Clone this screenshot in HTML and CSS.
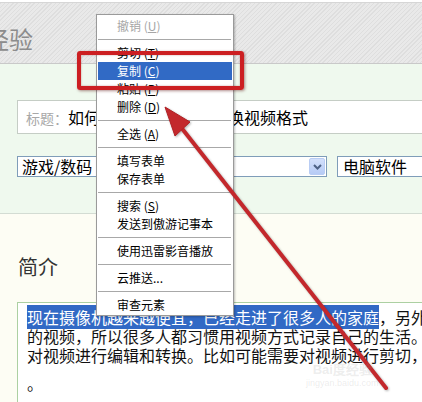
FILE: index.html
```html
<!DOCTYPE html>
<html lang="zh-CN">
<head>
    <meta charset="UTF-8">
    <meta name="viewport" content="width=device-width, initial-scale=1.0">
    <title>经验 - 编辑</title>
    <link rel="stylesheet" href="styles.css">
</head>
<body>
<div class="page">
    <div class="masthead">
        <span class="brand">经验</span>
    </div>

    <div class="editor">
        <div class="title-field">
            <span class="label">标题：</span>如何将摄像机的视频转换视频格式
        </div>
        <div class="category">
            <div class="select first">
                <span>游戏/数码</span>
                <span class="drop">
                    <svg width="9" height="6" viewBox="0 0 9 6"><path d="M1 1 L4.5 4.5 L8 1" fill="none" stroke="#4d6185" stroke-width="2"/></svg>
                </span>
            </div>
            <div class="select second">
                <span>电脑软件</span>
            </div>
        </div>
    </div>

    <div class="intro">
        <h3>简介</h3>
        <div class="content">
            <p><span class="sel">现在摄像机越来越便宜，已经走进了很多人的家庭</span>，另外</p>
            <p>的视频，所以很多人都习惯用视频方式记录自己的生活。</p>
            <p>对视频进行编辑和转换。比如可能需要对视频进行剪切，</p>
            <p class="end">。</p>
        </div>
    </div>
</div>

<!-- browser right-click menu -->
<ul class="context-menu">
    <li class="disabled">撤销 (<u>U</u>)</li>
    <li class="sep"></li>
    <li>剪切 (<u>T</u>)</li>
    <li class="active">复制 (<u>C</u>)</li>
    <li>粘贴 (<u>P</u>)</li>
    <li>删除 (<u>D</u>)</li>
    <li class="sep"></li>
    <li>全选 (<u>A</u>)</li>
    <li class="sep"></li>
    <li>填写表单</li>
    <li>保存表单</li>
    <li class="sep"></li>
    <li>搜索 (<u>S</u>)</li>
    <li>发送到傲游记事本</li>
    <li class="sep"></li>
    <li>使用迅雷影音播放</li>
    <li class="sep"></li>
    <li>云推送...</li>
    <li class="sep"></li>
    <li>审查元素</li>
</ul>

<!-- annotation -->
<div class="callout"></div>
<svg class="arrow" width="422" height="402" viewBox="0 0 422 402">
    <line x1="180" y1="126" x2="386" y2="388" stroke="#c3282c" stroke-width="4" stroke-linecap="round"/>
    <polygon points="165,107 190,122 175,136" fill="#c3282c" stroke="#b02024" stroke-width="1" stroke-linejoin="round"/>
</svg>

<div class="watermark">
    <div class="wm-logo">Bai度经验</div>
    <div class="wm-url">jingyan.baidu.com</div>
</div>
</body>
</html>
```

FILE: styles.css
```css
body {
    margin: 0;
    width: 422px;
    height: 402px;
    overflow: hidden;
    position: relative;
    background: #fff;
    font-family: "Noto Sans CJK SC", "Liberation Sans", sans-serif;
}

.page {
    padding-top: 2px;
}

/* top header */
.masthead {
    height: 62px;
    padding-top: 24px;
    box-sizing: border-box;
    border-top: 1px solid #d6d6d6;
    border-bottom: 1px solid #c9c9c9;
    background-color: #e9e9e9;
    background-image: repeating-linear-gradient(135deg, #dedede 0, #dedede 1px, transparent 1px, transparent 3px);
}

.brand {
    display: block;
    margin-left: -15px;
    font-size: 24px;
    line-height: 24px;
    color: #8c8c8c;
}

/* green form area */
.editor {
    background: #eff9ee;
    padding: 36px 0 36px 17px;
    border-bottom: 1px solid #d3dcd3;
}

.title-field {
    height: 32px;
    margin-right: -60px;
    border: 1px solid #c5cdc5;
    background: #fff;
    padding-left: 8px;
    font-size: 16px;
    line-height: 32px;
    color: #000;
    white-space: nowrap;
}

.title-field .label {
    font-size: 14px;
    color: #a8a8a8;
}

.category {
    display: flex;
    gap: 10px;
    margin-top: 22px;
    white-space: nowrap;
}

.select {
    height: 19px;
    flex-shrink: 0;
    border: 1px solid #7f9db9;
    background: #fff;
    display: flex;
    align-items: center;
    justify-content: space-between;
    padding-left: 4px;
    font-size: 16px;
    line-height: 19px;
    color: #000;
}

.select.first {
    width: 304px;
}

.select.second {
    width: 120px;
    padding-left: 5px;
}

.drop {
    width: 16px;
    height: 17px;
    margin-right: 1px;
    border: 1px solid #b9cdf4;
    border-radius: 2px;
    box-sizing: border-box;
    background: linear-gradient(#d3e0fb, #b6cbf5);
    display: flex;
    align-items: center;
    justify-content: center;
}

/* intro */
.intro {
    background: #fdfdf4;
    padding: 43px 0 30px 17px;
}

.intro h3 {
    margin: 0 0 25px 1px;
    font-size: 20px;
    line-height: 20px;
    font-weight: normal;
    color: #333;
}

.content {
    margin-right: -80px;
    border: 1px solid #acd0a2;
    background: #fff;
    padding: 5px 0 20px 9px;
}

.content p {
    margin: 0;
    font-size: 16px;
    line-height: 19px;
    color: #111;
    white-space: nowrap;
}

.content p.end {
    margin-top: 9px;
}

.sel {
    background: #3169c5;
    color: #fff;
}

/* context menu */
.context-menu {
    position: absolute;
    left: 96px;
    top: 14px;
    width: 138px;
    box-sizing: border-box;
    margin: 0;
    padding: 2px 1px 1px;
    list-style: none;
    background: #fff;
    border: 1px solid #9a9a9a;
    box-shadow: 1px 1px 2px rgba(0, 0, 0, 0.25);
    font-size: 12px;
}

.context-menu li {
    height: 18px;
    line-height: 18px;
    padding-left: 19px;
    color: #000;
    white-space: nowrap;
}

.context-menu li.disabled {
    color: #a6a6a6;
}

.context-menu li.active {
    background: #316ac5;
    color: #fff;
}

.context-menu li.sep {
    height: 9px;
    padding: 0;
    position: relative;
}

.context-menu li.sep::after {
    content: "";
    position: absolute;
    left: 0;
    right: 1px;
    top: 4px;
    border-top: 1px solid #a8a8a8;
}

/* red highlight box */
.callout {
    position: absolute;
    left: 77px;
    top: 51px;
    width: 167px;
    height: 39px;
    box-sizing: border-box;
    border: 4px solid #cc1f22;
    border-radius: 3px;
    box-shadow: 1px 1px 3px rgba(80, 0, 0, 0.45), inset 0 0 2px rgba(120, 0, 0, 0.4);
}

.arrow {
    position: absolute;
    left: 0;
    top: 0;
    filter: drop-shadow(1px 1px 1px rgba(0, 0, 0, 0.3));
}

.watermark {
    position: absolute;
    left: 306px;
    top: 362px;
    color: rgba(150, 150, 150, 0.18);
    font-family: "Liberation Sans", sans-serif;
    text-align: center;
}

.wm-logo {
    font-size: 13px;
    font-weight: bold;
    line-height: 16px;
}

.wm-url {
    font-size: 9px;
    line-height: 10px;
}
```
